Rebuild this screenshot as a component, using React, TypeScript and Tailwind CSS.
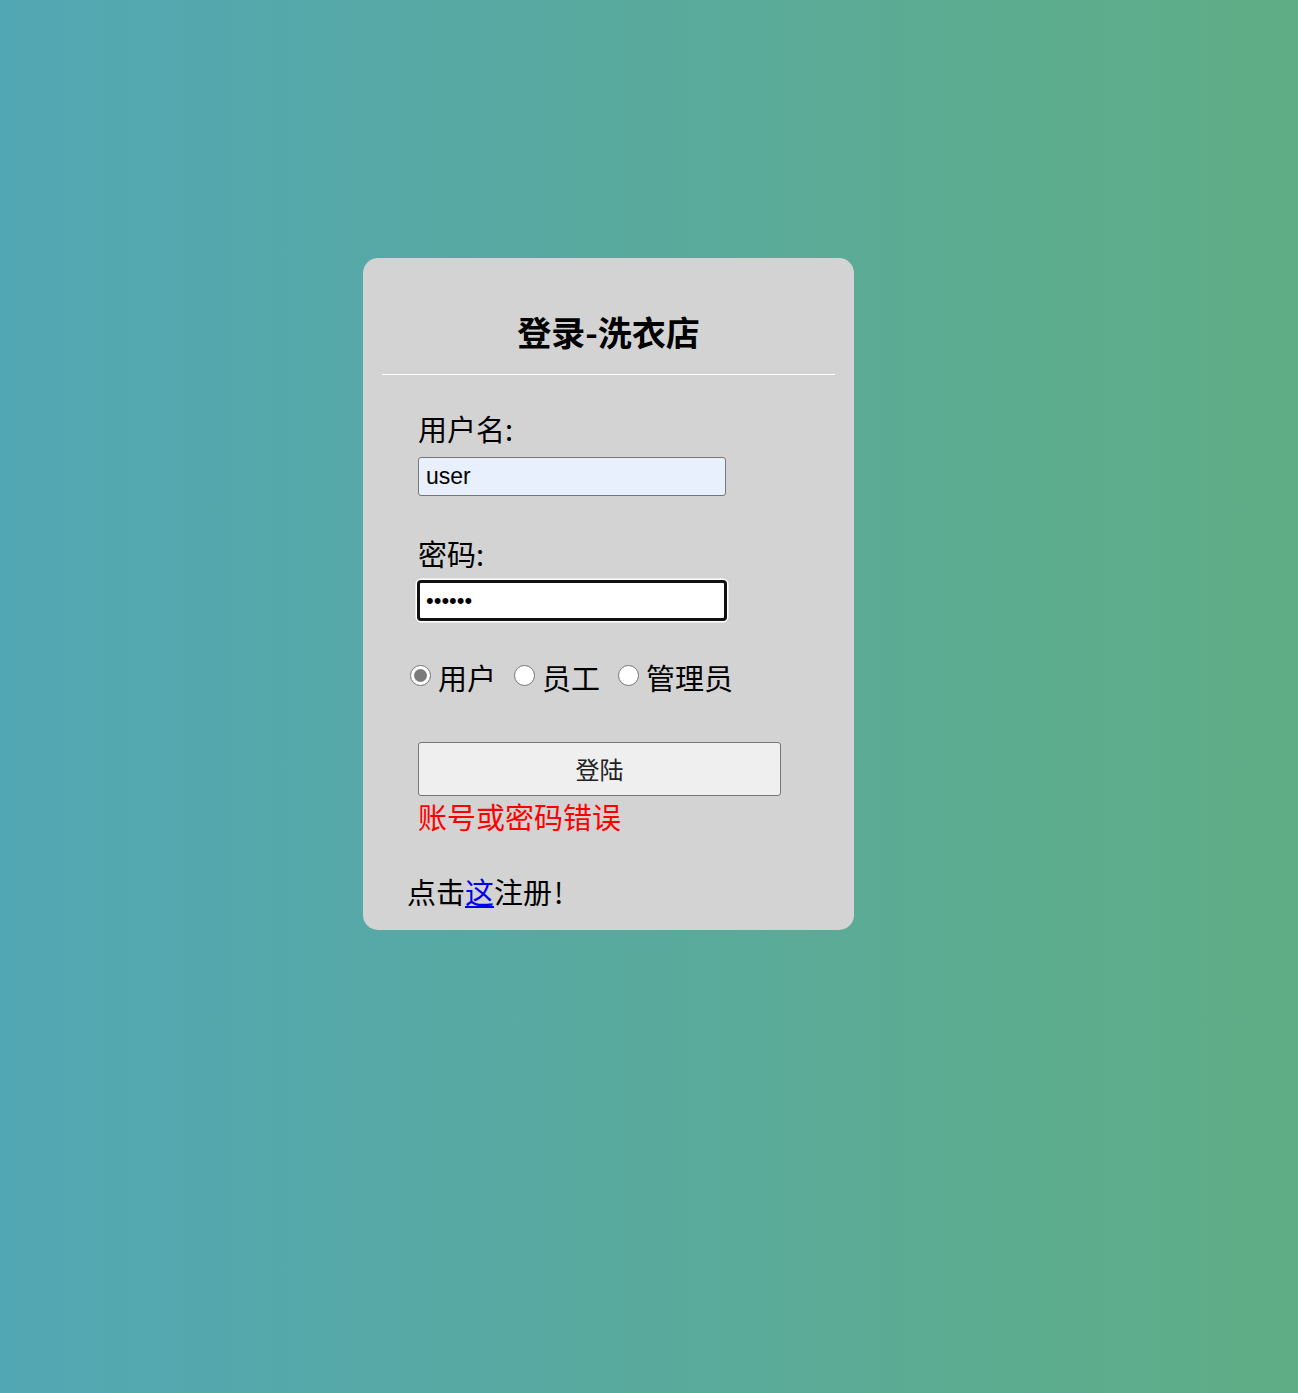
import React from "react";

const cjk = "font-['Microsoft_YaHei','Noto_Sans_CJK_SC',sans-serif]";

function Radio({ checked, label }: { checked?: boolean; label: string }) {
  return (
    <label className="flex items-center mr-[18px]">
      <span className="relative w-[21px] h-[21px] rounded-full border border-[#767676] bg-white flex items-center justify-center mt-[-4px]">
        {checked && <span className="w-[13px] h-[13px] rounded-full bg-[#7b7b7b]" />}
      </span>
      <span className="ml-[7px] text-[29px] leading-[36px] text-black">{label}</span>
    </label>
  );
}

export default function App() {
  return (
    <div className={`min-h-[1393px] w-full bg-[linear-gradient(to_right,#52a7b4,#5fad85)] pt-[258px] ${cjk}`}>
      <div className="ml-[363px] w-[491px] h-[672px] rounded-[15px] bg-[#d3d3d3] pt-[54px]">
        <h2 className="text-center text-[34px] leading-[40px] font-bold text-black">登录-洗衣店</h2>
        <div className="mx-[19px] mt-[22px] h-px bg-white" />
        <div className="pl-[55px]">
          <div className="mt-[35px] text-[29px] leading-[36px] text-black">用户名:</div>
          <input
            readOnly
            value="user"
            className="mt-[11px] block w-[308px] h-[39px] bg-[#e8f0fe] border border-[#767676] rounded-[3px] px-[7px] text-[23px] font-['Liberation_Sans',Arial,sans-serif] text-black outline-none"
          />
          <div className="mt-[39px] text-[29px] leading-[36px] text-black">密码:</div>
          <input
            readOnly
            type="password"
            value="123456"
            className="mt-[9px] block w-[310px] h-[41px] ml-[-1px] bg-white border-[3px] border-[#111] rounded-[4px] px-[6px] text-[22px] font-['Liberation_Sans',Arial,sans-serif] text-black outline-none shadow-[0_0_0_1.5px_#fff]"
          />
        </div>
        <div className="pl-[47px] mt-[38px] flex items-center h-[36px]">
          <Radio checked label="用户" />
          <Radio label="员工" />
          <Radio label="管理员" />
        </div>
        <div className="pl-[55px]">
          <button className="mt-[47px] block w-[363px] h-[54px] bg-[#efefef] border border-[#767676] rounded-[3px] text-[24px] text-[#222]">
            登陆
          </button>
          <div className="mt-[2px] text-[29px] leading-[36px] text-[#ff0000]">账号或密码错误</div>
        </div>
        <div className="pl-[44px] mt-[39px] text-[29px] leading-[36px] text-black">
          点击<a href="#" className="text-[#0000ee] underline">这</a>注册<span className="ml-[2px]">!</span>
        </div>
      </div>
    </div>
  );
}
